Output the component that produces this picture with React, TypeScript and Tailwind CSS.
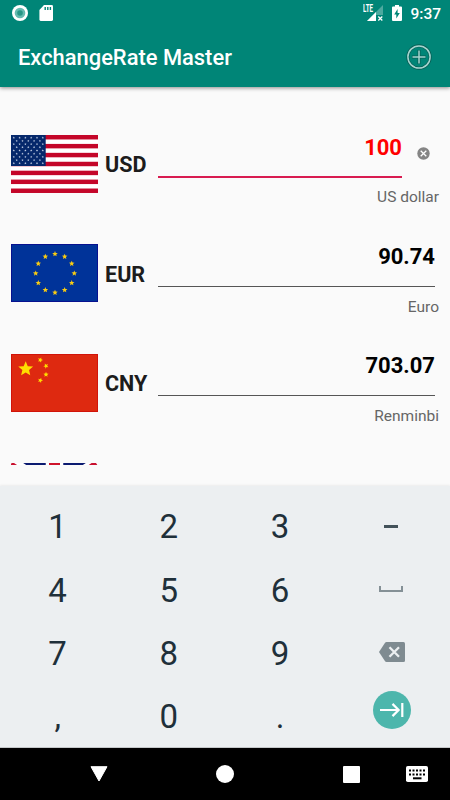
import { useState, type ReactNode } from "react";

const star = (cx: number, cy: number, r: number, rot = 0) =>
  Array.from({ length: 10 }, (_, i) => {
    const radius = i % 2 === 0 ? r : r * 0.45;
    const a = ((i * 36 - 90 + rot) * Math.PI) / 180;
    return `${(cx + radius * Math.cos(a)).toFixed(2)},${(cy + radius * Math.sin(a)).toFixed(2)}`;
  }).join(" ");

const UsFlag = () => (
  <svg viewBox="0 0 87 58" className="w-full h-full">
    <rect width="87" height="58" fill="#fff" />
    {[0, 1, 2, 3, 4, 5, 6].map((i) => (
      <rect key={i} y={i * 8.92} width="87" height="4.46" fill="#c40629" />
    ))}
    <rect width="34.7" height="31" fill="#05286b" />
    {Array.from({ length: 9 }, (_, row) =>
      Array.from({ length: row % 2 === 0 ? 6 : 5 }, (_, col) => (
        <polygon
          key={`${row}-${col}`}
          points={star((row % 2 === 0 ? 2.8 : 5.7) + col * 5.8, 2.7 + row * 3.2, 1.2)}
          fill="#c3cfe4"
        />
      ))
    )}
  </svg>
);

const EuFlag = () => (
  <svg viewBox="0 0 87 58" className="w-full h-full">
    <rect width="87" height="58" fill="#003399" />
    <rect x="0.5" y="0.5" width="86" height="57" fill="none" stroke="#07118f" />
    {Array.from({ length: 12 }, (_, i) => {
      const a = (i * Math.PI) / 6;
      return (
        <polygon
          key={i}
          points={star(44 + 19.3 * Math.sin(a), 29.3 - 19.3 * Math.cos(a), 2.9)}
          fill="#f7cb13"
        />
      );
    })}
  </svg>
);

const CnFlag = () => (
  <svg viewBox="0 0 87 58" className="w-full h-full">
    <rect width="87" height="58" fill="#de2910" />
    <rect x="0.5" y="0.5" width="86" height="57" fill="none" stroke="#d11309" />
    <g fill="#ffde00">
      <polygon points={star(14.7, 15, 7.8)} />
      <polygon points={star(29.3, 6, 2.7, 20)} />
      <polygon points={star(35, 12, 2.7, 45)} />
      <polygon points={star(35, 20.5, 2.7, 0)} />
      <polygon points={star(29.3, 26.3, 2.7, 20)} />
    </g>
  </svg>
);

const UkFlag = () => (
  <svg viewBox="0 0 87 58" className="w-full h-full">
    <rect width="87" height="58" fill="#0b1a70" />
    <path d="M0 0L87 58M87 0L0 58" stroke="#fff" strokeWidth="13.5" />
    <path d="M0 1L43 29.5M85 0L43 29M0 58L43 29M87 58L43 29" stroke="#c8102e" strokeWidth="5" />
    <path d="M43.5 0V58M0 29H87" stroke="#fff" strokeWidth="17.5" />
    <path d="M43.5 0V58M0 29H87" stroke="#cf142b" strokeWidth="11" />
  </svg>
);

type Currency = { code: string; name: string; value: string; flag: ReactNode };

const currencies: Currency[] = [
  { code: "USD", name: "US dollar", value: "100", flag: <UsFlag /> },
  { code: "EUR", name: "Euro", value: "90.74", flag: <EuFlag /> },
  { code: "CNY", name: "Renminbi", value: "703.07", flag: <CnFlag /> },
];

const StatusBar = () => (
  <div className="h-7 flex items-center pl-3 pr-[9px] text-white">
    <svg width="16" height="16" viewBox="0 0 16 16" className="mt-[-2px]">
      <circle cx="8" cy="8" r="8" fill="#fff" />
      <circle cx="8" cy="8" r="5.3" fill="#65bbb0" />
      <circle cx="8" cy="8" r="2.8" fill="#279686" />
    </svg>
    <svg width="14" height="16" viewBox="0 0 14 16" className="ml-[11px] mt-[-2px]">
      <path d="M5 0H12.700Q14 0 14 1.400V14.600Q14 16 12.700 16H1.700Q.4 16 .4 14.600V5Z" fill="#fff" />
      <path d="M6.200 2V5M8.800 2V5M11.400 2V5" stroke="#008577" strokeWidth="1.4" />
    </svg>
    <div className="ml-auto relative w-[20px] h-4 mt-[-2px]">
      <svg width="20" height="16" viewBox="0 0 20 16">
        <path d="M4 16L20 0V16Z" fill="#4da99f" />
        <path d="M4 16L13 7V16Z" fill="#fff" />
        <rect x="13" y="10" width="7" height="6" fill="#008577" />
        <path d="M15.300 11.500L19.300 15.500M19.300 11.500L15.300 15.500" stroke="#fff" strokeWidth="1.3" />
      </svg>
      <span className="absolute left-0 top-0 text-[10px] leading-[8px] h-2 font-bold origin-left scale-x-[.62] w-[17px] bg-[#008577]">
        LTE
      </span>
    </div>
    <svg width="10" height="16" viewBox="0 0 10 16" className="ml-[9px] mt-[-2px]">
      <path d="M3 0H7V1.500H9Q10 1.500 10 2.500V15Q10 16 9 16H1Q0 16 0 15V2.500Q0 1.500 1 1.500H3Z" fill="#fff" />
      <path d="M5.600 4L2.200 9.400H4.300V13.500L7.800 8H5.600Z" fill="#008577" />
    </svg>
    <span className="ml-2 text-[15.5px] leading-4 font-medium">9:37</span>
  </div>
);

const CurrencyRow = ({ currency, active }: { currency: Currency; active: boolean }) => (
  <div className="h-[109.3px] shrink-0 flex pl-[11px] pr-[11px]">
    <div className="w-[87px] h-[58px] mt-[19.7px] shrink-0">{currency.flag}</div>
    <div className="w-[60px] shrink-0 pl-[7px] pt-[37px] text-[22px] leading-[26px] font-bold text-[#1c1c1c]">
      <span className="inline-block origin-left scale-x-[.98]">{currency.code}</span>
    </div>
    <div className="flex-1 flex flex-col">
      <div className="flex h-16">
        <div
          className={
            active
              ? "flex-1 h-[63px] pt-[19.5px] border-b-2 border-[#d81b50] text-right text-[22px] leading-[26px] font-bold text-[#ff0000]"
              : "flex-1 h-[62px] pt-[19px] mr-1 border-b border-[#555] text-right text-[22px] leading-[26px] font-bold text-black"
          }
        >
          {currency.value}
        </div>
        {active && (
          <button className="w-[37px] h-[13px] mt-[31.5px] pl-[14.5px] flex">
            <svg width="13" height="13" viewBox="0 0 13 13">
              <circle cx="6.5" cy="6.5" r="6.2" fill="#858585" />
              <path d="M3.700 3.700L9.300 9.300M9.300 3.700L3.700 9.300" stroke="#fff" strokeWidth="1.3" />
            </svg>
          </button>
        )}
      </div>
      <p className="mt-2 text-right text-[15.5px] leading-5 text-[#666]">{currency.name}</p>
    </div>
  </div>
);

const Key = ({ children, onClick }: { children: ReactNode; onClick?: () => void }) => (
  <button
    onClick={onClick}
    className="flex items-center justify-center text-[33px] leading-[38px] text-[#1f303a]"
  >
    {children}
  </button>
);

const App = () => {
  const [amount, setAmount] = useState("100");
  const press = (key: string) => setAmount((prev) => prev + key);

  return (
    <div className="w-[450px] h-[800px] overflow-hidden flex flex-col bg-[#fafafa] font-[Roboto,sans-serif]">
      <header className="h-[87px] shrink-0 bg-[#008577] text-white shadow-[0_1px_4px_rgba(0,0,0,0.45)]">
        <StatusBar />
        <div className="h-[59px] flex items-center justify-between px-[18px]">
          <h1 className="text-[21.9px] leading-[26px] font-medium">ExchangeRate Master</h1>
          <svg width="26" height="26" viewBox="0 0 26 26" fill="none" className="mt-[-1px]">
            <circle cx="13" cy="13" r="11.2" stroke="#075e55" strokeWidth="3" />
            <path d="M13 6V20M6 13H20" stroke="#075e55" strokeWidth="3" />
            <circle cx="13" cy="13" r="11.1" stroke="#a4d5cf" strokeWidth="1.5" />
            <path d="M13 6.500V19.500M6.500 13H19.500" stroke="#a4d5cf" strokeWidth="1.5" />
          </svg>
        </div>
      </header>

      <main className="h-[378px] shrink-0 pt-[28.3px] overflow-hidden flex flex-col">
        {currencies.map((c, i) => (
          <CurrencyRow
            key={c.code}
            currency={i === 0 ? { ...c, value: amount } : c}
            active={i === 0}
          />
        ))}
        {/* next row, only its top edge is scrolled into view */}
        <div className="w-[87px] h-[58px] mt-[19.5px] ml-[11px] shrink-0">
          <UkFlag />
        </div>
      </main>

      <section className="mt-[21px] h-[262px] shrink-0 bg-[#eceff1] border-b border-[#c4c7c9] shadow-[0_-1px_2px_rgba(0,0,0,0.06)] pl-[2px] pr-[3px] pt-[9.5px] grid grid-cols-4 auto-rows-[63.4px]">
        <Key onClick={() => press("1")}>1</Key>
        <Key onClick={() => press("2")}>2</Key>
        <Key onClick={() => press("3")}>3</Key>
        <Key>
          <span className="w-[14px] h-[3px] mt-[-1px] bg-[#43525a]" />
        </Key>
        <Key onClick={() => press("4")}>4</Key>
        <Key onClick={() => press("5")}>5</Key>
        <Key onClick={() => press("6")}>6</Key>
        <Key>
          <span className="w-[24px] h-[6px] mt-[-4px] border-2 border-t-0 border-[#849096]" />
        </Key>
        <Key onClick={() => press("7")}>7</Key>
        <Key onClick={() => press("8")}>8</Key>
        <Key onClick={() => press("9")}>9</Key>
        <Key onClick={() => setAmount((prev) => prev.slice(0, -1))}>
          <svg width="26" height="20" viewBox="0 0 26 20" className="mt-[-3px] ml-px">
            <path d="M7.500 0H24.500Q26 0 26 1.500V18.500Q26 20 24.500 20H7.500Q6.500 20 5.900 19.100L0 10L5.900 .9Q6.500 0 7.500 0Z" fill="#7f8b91" />
            <path d="M10.500 5.200L20 14.800M20 5.200L10.500 14.800" stroke="#eceff1" strokeWidth="2.3" />
          </svg>
        </Key>
        <Key onClick={() => press(",")}>,</Key>
        <Key onClick={() => press("0")}>0</Key>
        <Key onClick={() => press(".")}>.</Key>
        <Key>
          <svg width="38" height="38" viewBox="0 0 38 38" className="mt-[-15px] ml-px">
            <circle cx="19" cy="19" r="19" fill="#4db6ac" />
            <path d="M7 19H25M19.500 12.900L25.600 19L19.500 25.100M29.300 12V26" fill="none" stroke="#fff" strokeWidth="2.2" />
          </svg>
        </Key>
      </section>

      <nav className="h-[52px] shrink-0 bg-black flex items-center">
        <svg width="18" height="16" viewBox="0 0 18 16" className="ml-[90px]">
          <path d="M1 .7H17L9 15Z" fill="#fff" stroke="#fff" strokeLinejoin="round" />
        </svg>
        <span className="ml-[108px] size-[18px] rounded-full bg-white" />
        <span className="ml-[109px] w-[17px] h-[17px] rounded-[1px] bg-white" />
        <svg width="22" height="16" viewBox="0 0 22 16" className="ml-[46px]">
          <rect width="22" height="16" rx="1.8" fill="#fff" />
          <path d="M3 4.500H20M3 8.500H20" stroke="#000" strokeWidth="2" strokeDasharray="2 1.5" />
          <path d="M7 12.300H15.500" stroke="#000" strokeWidth="2" />
        </svg>
      </nav>
    </div>
  );
};

export default App;
